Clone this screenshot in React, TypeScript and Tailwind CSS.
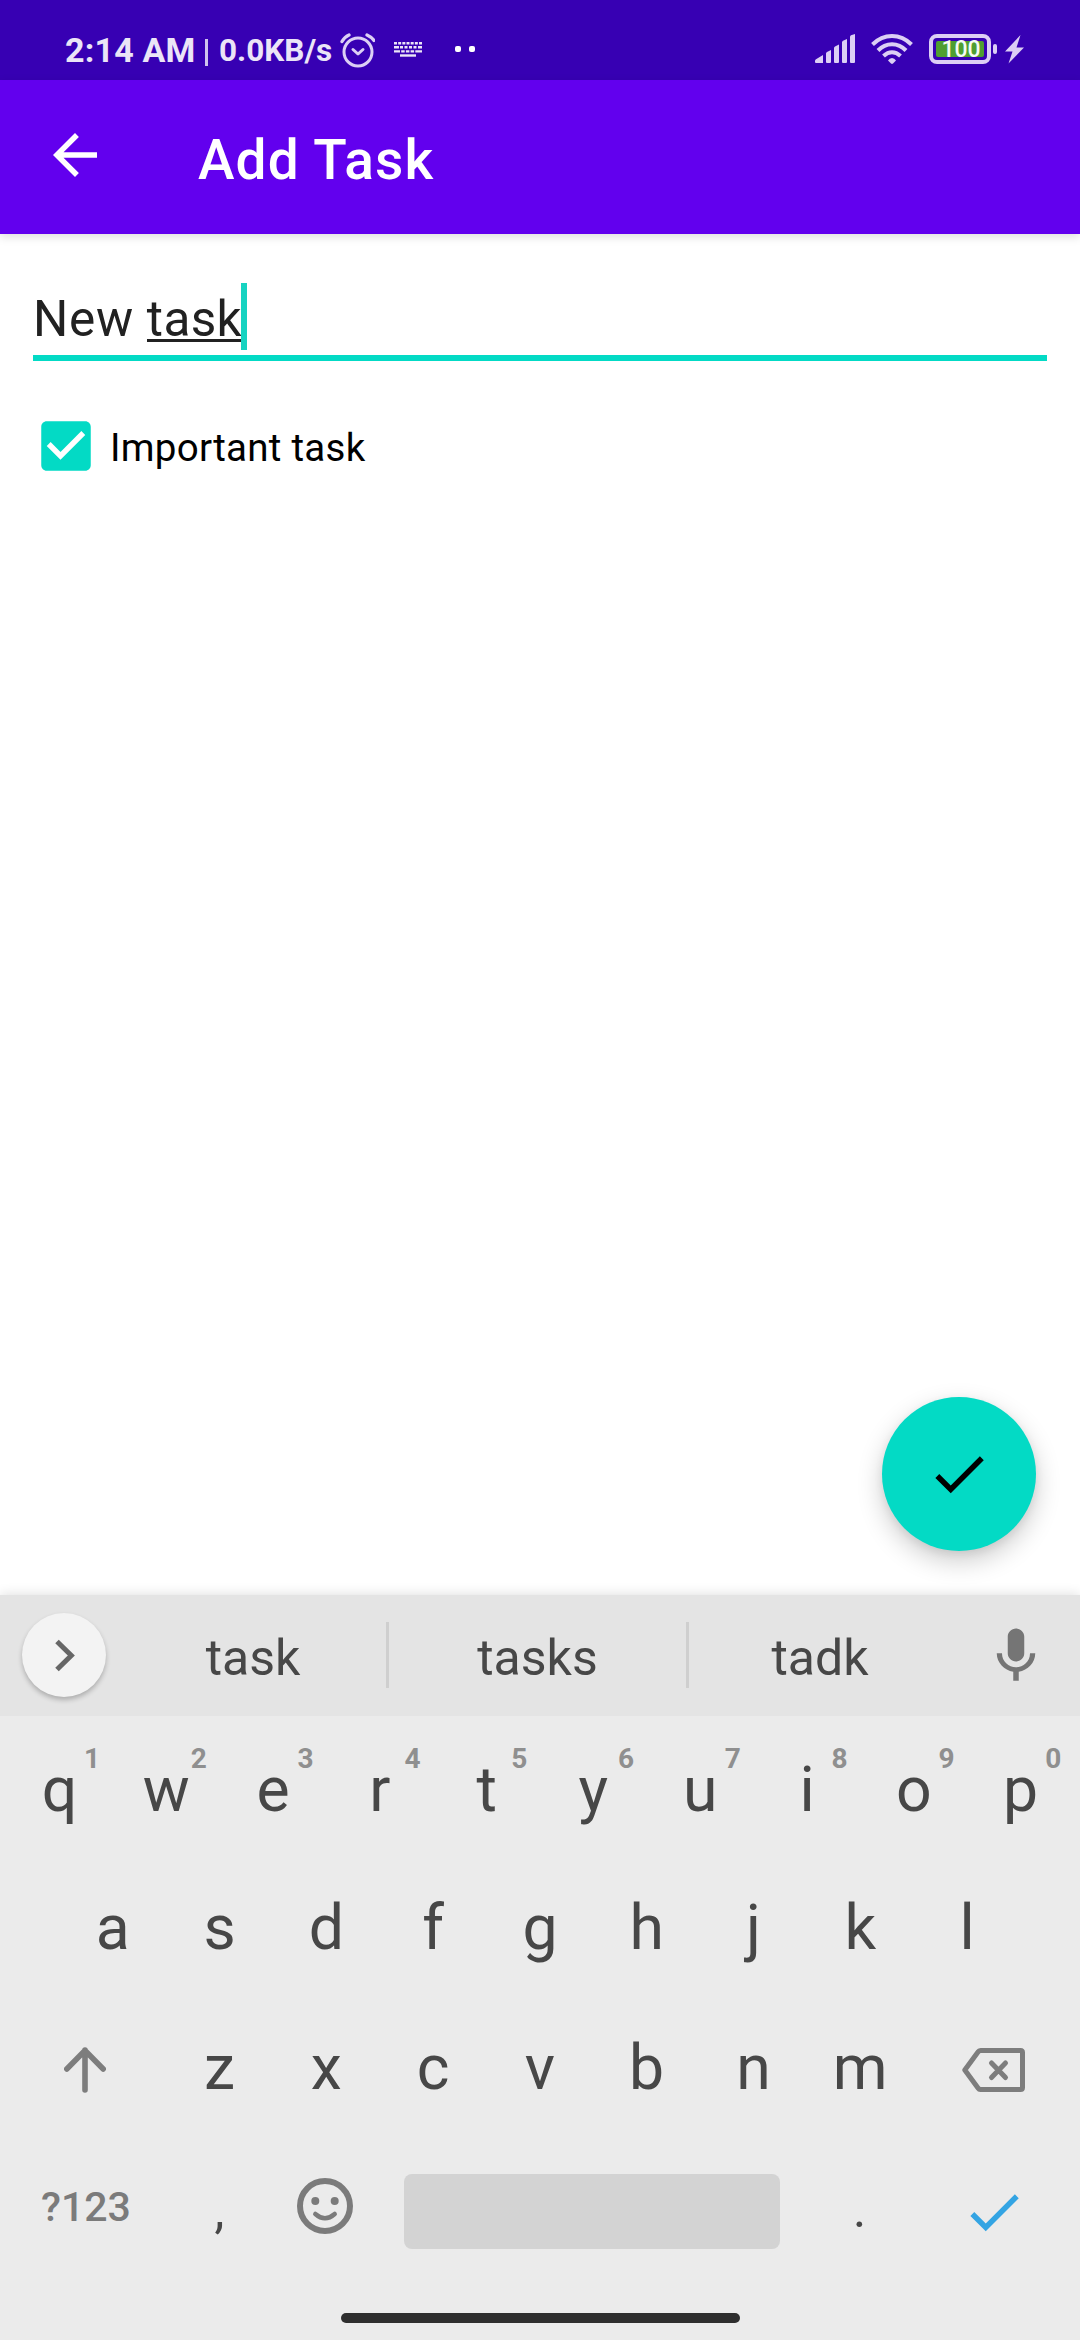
import React from "react";

const topRow = ["q", "w", "e", "r", "t", "y", "u", "i", "o", "p"];
const middleRow = ["a", "s", "d", "f", "g", "h", "j", "k", "l"];
const bottomRow = ["z", "x", "c", "v", "b", "n", "m"];

function StatusBar() {
  return (
    <header className="flex h-20 items-start bg-[#3700b3] pt-[33px] text-[#ebe5f7]">
      <div className="flex h-[34px] w-full items-start">
        <span className="ml-[65px] w-[132px] text-[34px] leading-[34px] font-bold tracking-[0.2px] whitespace-nowrap">2:14 AM</span>
        <span className="mt-[6px] ml-[8px] h-[27px] w-[3px] bg-[#cfc3ee]" />
        <span className="ml-[11px] w-[116px] text-[31.5px] leading-[36px] font-bold whitespace-nowrap">0.0KB/s</span>
        <svg className="ml-[5px] h-[35px] w-[35px] shrink-0" viewBox="0 0 35 35" fill="none" stroke="#dccff5" strokeLinecap="round">
          <circle cx="18" cy="19" r="14" strokeWidth="3" />
          <path d="M13 16.500l5 4.500 5-4.500" strokeWidth="3" strokeLinejoin="round" />
          <path d="M2 8.500Q4.500 4 9 2M34 7.500Q31.500 4 27 2" strokeWidth="3.300" />
        </svg>
        <svg className="mt-[9px] ml-[19px] h-[15px] w-[28px] shrink-0" viewBox="0 0 28 15" stroke="#ebe5f7" strokeWidth="2.400">
          <path d="M0 1.200H28" strokeDasharray="3 1.170" />
          <path d="M0 5.300H28" strokeDasharray="5 1 3 1.500 3 1.500 3 1.500 3 1.500" />
          <path d="M0 9.400H28" strokeDasharray="6 1.200 3.500 1.200 3.500 1.200 3.500 1.200 7" />
          <path d="M6 13.500H22" />
        </svg>
        <span className="mt-[13px] ml-[33px] size-[6px] rounded-[2px] bg-white" />
        <span className="mt-[13px] ml-[8px] size-[6px] rounded-[2px] bg-white" />
        <svg className="mt-[1px] ml-[340px] h-[30px] w-[40px] shrink-0" viewBox="0 0 40 30" fill="#dccff5">
          <path d="M0 27q0-1 1-1.700L8 21V29H1q-1 0-1-1zM11 19.500q0-1 1-1.500L16 16V28q0 1-1 1H12q-1 0-1-1zM19 14q0-1 1-1.500L24 10.500V28q0 1-1 1H20q-1 0-1-1zM27 8.500q0-1 1-1.700L32 5V28q0 1-1 1H28q-1 0-1-1zM35 3q0-1 1-1.700L40 0V28q0 1-1 1H36q-1 0-1-1z" />
        </svg>
        <svg className="mt-[1px] ml-[16px] h-[30px] w-[42px] shrink-0" viewBox="0 0 42 30" fill="none" stroke="#dccff5" strokeWidth="4">
          <path d="M1.500 10.500Q10 2 21 2T40.500 10.500" />
          <path d="M7 16.500Q13 10.200 21 10.200T35 16.500" />
          <path d="M12.500 22Q16.500 18.200 21 18.200T29.500 22" />
          <path d="M17 26.500Q18.500 24 21 24T25 26.500L22 29.500Q21 30.300 20 29.500Z" fill="#dccff5" stroke="none" />
        </svg>
        <div className="mt-[1px] ml-[16px] flex h-[30px] w-[62px] shrink-0 rounded-[8px] border-4 border-[#dccff5] p-[3px]">
          <div className="flex h-[16px] w-[48px] items-center justify-center rounded-[2px] bg-[#4f9e31] pt-[2px] pl-[2px] text-[23px] leading-[16px] font-medium text-[#f5fbf3]">100</div>
        </div>
        <span className="mt-[11px] ml-[2px] h-[10px] w-[4px] rounded-[2px] bg-[#dccff5]" />
        <svg className="mt-[2px] ml-[8px] h-[29px] w-[19px] shrink-0" viewBox="0 0 19 29" fill="#dccff5">
          <path d="M15.500 0L0 16.500H7.500L3.500 28.500L19 12.500H11.500Z" />
        </svg>
      </div>
    </header>
  );
}

function AppBar() {
  return (
    <div className="relative z-10 flex h-[154px] items-start bg-[#6200ee] text-white shadow-[0_3px_9px_rgba(0,0,0,0.13)]">
      <svg className="mt-[42px] ml-[42px] size-[66px]" viewBox="0 0 24 24" fill="currentColor">
        <path d="M20 11H7.830l5.590-5.590L12 4l-8 8 8 8 1.410-1.410L7.830 13H20v-2z" />
      </svg>
      <h1 className="mt-[48px] ml-[90px] text-[55px] leading-[64px] font-medium tracking-[1.1px]">Add Task</h1>
    </div>
  );
}

function TaskForm() {
  return (
    <main className="flex h-[1361px] flex-col bg-white">
      <div className="mt-[49px] ml-[33px] flex h-[78px] w-[1014px] items-start border-b-[6px] border-[#03dac5] text-[49.5px] leading-[67px] tracking-[0.35px] text-[#212121]">
        <span className="pt-[3px] tracking-[0.7px] whitespace-pre">New </span>
        <span className="flex h-[59px] items-start border-b-[3px] border-[#212121] pt-[3px] leading-[67px]">task</span>
        <span className="-ml-px h-[67px] w-[6px] bg-[#17d3c1]" />
      </div>
      <label className="mt-[52px] ml-[33px] flex items-center">
        <svg className="size-[66px]" viewBox="0 0 24 24" fill="#03dac5">
          <path d="M19 3H5c-1.110 0-2 .9-2 2v14c0 1.100.89 2 2 2h14c1.110 0 2-.9 2-2V5c0-1.100-.89-2-2-2zm-9 14l-5-5 1.410-1.410L10 14.170l7.590-7.590L19 8l-9 9z" />
        </svg>
        <span className="ml-[11px] pt-[4px] text-[38.5px] tracking-[0.27px] text-black">Important task</span>
      </label>
      <button className="mt-auto mr-[44px] mb-[44px] flex size-[154px] items-center justify-center self-end rounded-full bg-[#03dac5] shadow-[0_10px_26px_rgba(0,0,0,0.2),0_3px_8px_rgba(0,0,0,0.07)]">
        <svg className="size-[66px]" viewBox="0 0 24 24" fill="black">
          <path d="M9 16.170L4.830 12l-1.420 1.410L9 19 21 7l-1.410-1.410z" />
        </svg>
      </button>
    </main>
  );
}

function Suggestions() {
  return (
    <div className="flex h-[121px] items-center bg-[#e4e4e4] text-[50px] leading-[60px] text-[#474747]">
      <button className="-mt-px ml-[22px] flex size-[84px] items-center justify-center rounded-full bg-[#f3f3f3] shadow-[0_3px_5px_rgba(0,0,0,0.24)]">
        <svg className="ml-[2px] h-[33px] w-[20px]" viewBox="0 0 20 33" fill="none" stroke="#666" strokeWidth="5">
          <path d="M2 2.500L16.300 16.500L2 30.500" />
        </svg>
      </button>
      <span className="ml-[14px] w-[266px] pt-[4px] text-center">task</span>
      <span className="-mt-px h-[66px] w-[3px] bg-[#cfcfcf]" />
      <span className="w-[297px] pt-[4px] text-center">tasks</span>
      <span className="-mt-px h-[66px] w-[3px] bg-[#cfcfcf]" />
      <span className="w-[262px] pt-[4px] text-center">tadk</span>
      <svg className="ml-[32px] size-[66px]" viewBox="0 0 24 24" fill="#757575">
        <path d="M12 14c1.660 0 3-1.340 3-3V5c0-1.660-1.340-3-3-3S9 3.340 9 5v6c0 1.660 1.340 3 3 3zm5.100-3c0 3-2.400 5.100-5.100 5.100S6.900 14 6.900 11H5c0 3.410 2.720 6.230 6 6.720V21h2v-3.280c3.280-.48 6-3.300 6-6.720h-1.900z" />
      </svg>
    </div>
  );
}

function Key({ label, hint }: { label: string; hint?: string }) {
  return (
    <button className="relative flex h-full w-[106.8px] items-center justify-center text-[62.5px] leading-[72px]">
      {label}
      {hint && <span className="absolute top-[22px] left-[78px] text-[28px] leading-[32px] font-bold text-[#8f8f8f]">{hint}</span>}
    </button>
  );
}

function Keyboard() {
  return (
    <section className="relative z-10 flex h-[745px] flex-col bg-[#ebebeb] text-[#474747] shadow-[0_0_12px_rgba(0,0,0,0.14)]">
      <Suggestions />
      <div className="mt-[5px] flex h-[138px] justify-center">
        {topRow.map((k, i) => <Key key={k} label={k} hint={String((i + 1) % 10)} />)}
      </div>
      <div className="flex h-[138px] justify-center">
        {middleRow.map((k) => <Key key={k} label={k} />)}
      </div>
      <div className="mt-px flex h-[139px] items-center">
        <button className="flex w-[166px] justify-center pl-[3px]">
          <svg className="mt-[5px] h-[46px] w-[42px]" viewBox="0 0 42 46" fill="none" stroke="#7d7d7d" strokeWidth="5.600" strokeLinecap="round" strokeLinejoin="round">
            <path d="M21 43V3M2.800 22L21 3.500L39.200 22" />
          </svg>
        </button>
        {bottomRow.map((k) => <Key key={k} label={k} />)}
        <button className="ml-[48px] flex">
          <svg className="mt-[4px] h-[44px] w-[63px]" viewBox="0 0 63 44" fill="none" stroke="#7d7d7d" strokeWidth="5" strokeLinecap="round" strokeLinejoin="round">
            <path d="M18.500 2.500H58.500Q60.500 2.500 60.500 4.500V39.500Q60.500 41.500 58.500 41.500H18.500Q17 41.500 16 40L2.800 22L16 4Q17 2.500 18.500 2.500Z" />
            <path d="M29.500 15L43.500 29.500M43.500 15L29.500 29.500" />
          </svg>
        </button>
      </div>
      <div className="flex h-[139px] items-center">
        <button className="ml-[33px] w-[106px] text-center text-[41px] leading-[48px] font-medium text-[#7b7b7b]">?123</button>
        <button className="ml-[27px] w-[107px] pt-[7px] text-center text-[50px] leading-[60px]">,</button>
        <svg className="-mt-[2px] ml-[24px] size-[56px]" viewBox="0 0 56 56" fill="none" stroke="#7b7b7b" strokeLinecap="round">
          <circle cx="28" cy="28" r="25" strokeWidth="6" />
          <path d="M18.300 36Q28 44.500 37.700 36" strokeWidth="4.500" />
          <circle cx="18.300" cy="23" r="4" fill="#7b7b7b" stroke="none" />
          <circle cx="37.700" cy="23" r="4" fill="#7b7b7b" stroke="none" />
        </svg>
        <button aria-label="space" className="mt-[10px] ml-[51px] h-[75px] w-[376px] rounded-[8px] bg-[#d3d3d3]" />
        <button className="ml-[26px] w-[107px] pt-[7px] text-center text-[50px] leading-[60px]">.</button>
        <svg className="mt-[10px] ml-[48px] size-[66px]" viewBox="0 0 24 24" fill="#33a4e3">
          <path d="M9 16.170L4.830 12l-1.420 1.410L9 19 21 7l-1.410-1.410z" />
        </svg>
      </div>
      <div className="mt-[37px] h-[10px] w-[399px] self-center rounded-[5px] bg-[#2e2e2e]" />
    </section>
  );
}

export default function App() {
  return (
    <div className="h-[2340px] w-[1080px] overflow-hidden font-['Roboto',sans-serif]">
      <StatusBar />
      <AppBar />
      <TaskForm />
      <Keyboard />
    </div>
  );
}
